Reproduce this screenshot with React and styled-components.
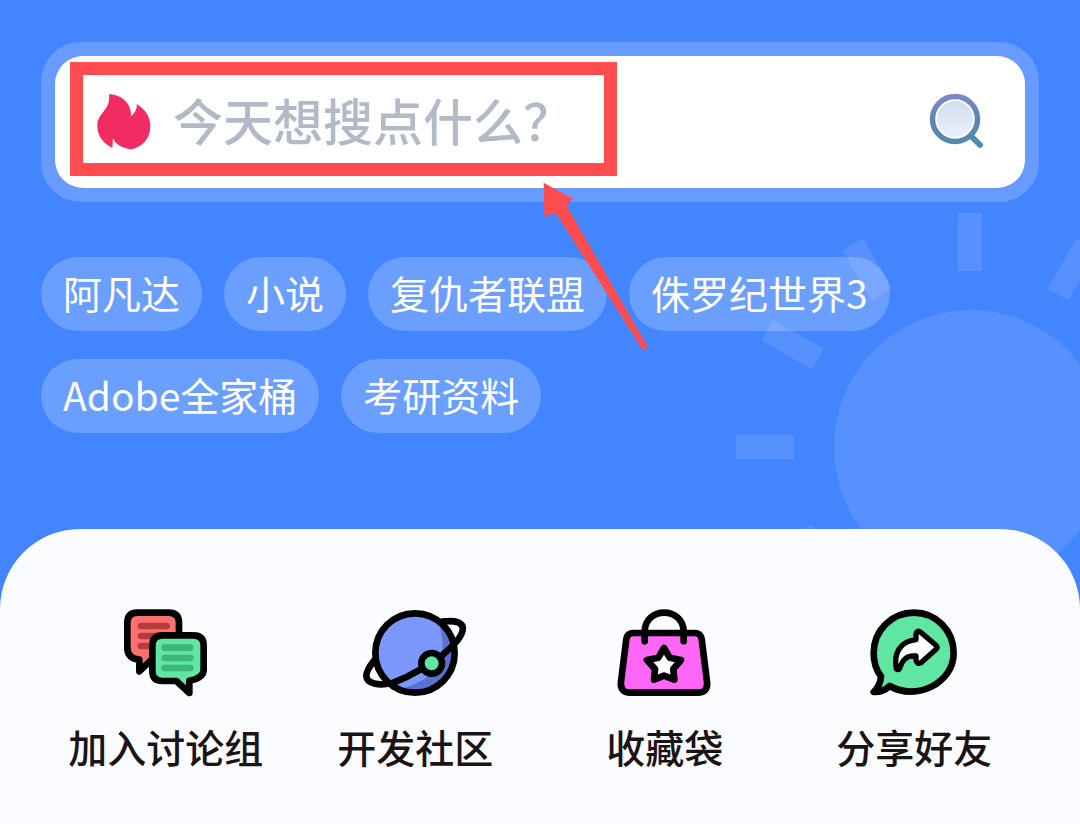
import React from 'react';
import styled, { createGlobalStyle } from 'styled-components';

const GlobalStyle = createGlobalStyle`
  * {
    box-sizing: border-box;
  }
  body {
    margin: 0;
    background: #4285ff;
    font-family: "Noto Sans CJK SC", "Noto Sans", sans-serif;
  }
  button, input {
    font-family: inherit;
  }
`;

const Page = styled.div`
  position: relative;
  display: flex;
  flex-direction: column;
  min-height: 100vh;
  overflow: hidden;
  background: #4285ff;
`;

const Sun = styled.svg`
  position: absolute;
  top: 200px;
  right: 0;
  width: 360px;
  height: 420px;
  fill: #5790ff;
`;

const Header = styled.header`
  position: relative;
  display: flex;
  flex-direction: column;
  gap: 55px;
  padding: 42px 41px 96px;
`;

const SearchBar = styled.form`
  position: relative;
  display: flex;
  align-items: center;
  height: 160px;
  padding: 0 40px 0 42px;
  border: 14px solid #689bff;
  border-radius: 40px;
  background: #689bff;
  &::before {
    content: '';
    position: absolute;
    inset: 0;
    border-radius: 28px;
    background: #fff;
  }
`;

const FlameIcon = styled.svg`
  position: relative;
  flex: none;
  width: 54px;
  height: 56px;
  fill: #f22c63;
`;

const SearchInput = styled.input`
  position: relative;
  flex: 1;
  min-width: 0;
  height: 80px;
  padding: 0 0 6px;
  margin-left: 22px;
  border: 0;
  outline: 0;
  background: transparent;
  color: #333;
  font-size: 50px;
  font-weight: 500;
  line-height: 74px;
  &::placeholder {
    color: #b2bac8;
    opacity: 1;
  }
`;

const SearchButton = styled.button`
  position: relative;
  flex: none;
  width: 58px;
  height: 58px;
  padding: 0;
  border: 0;
  background: transparent;
  cursor: pointer;
  svg {
    display: block;
  }
`;

const Highlight = styled.div`
  position: absolute;
  top: 6px;
  left: 15px;
  width: 547px;
  height: 114px;
  border: 13px solid #ff4d4f;
  pointer-events: none;
`;

const Arrow = styled.svg`
  position: absolute;
  z-index: 1;
  top: 126px;
  left: 488px;
  width: 106px;
  height: 170px;
  fill: #ff4d4f;
  pointer-events: none;
`;

const Tags = styled.div`
  display: flex;
  flex-wrap: wrap;
  gap: 28px 22px;
`;

const Tag = styled.button`
  height: 74px;
  padding: 0 22px 4px;
  border: 0;
  border-radius: 37px;
  background: rgba(255, 255, 255, 0.21);
  color: #fff;
  font-size: 39px;
  line-height: 70px;
  white-space: nowrap;
  cursor: pointer;
`;

const Sheet = styled.nav`
  position: relative;
  flex: 1;
  display: grid;
  grid-template-columns: repeat(4, 1fr);
  align-items: start;
  padding: 78px 41px 40px;
  border-radius: 80px 80px 0 0;
  background: #fafcff;
`;

const Entry = styled.a`
  display: flex;
  flex-direction: column;
  align-items: center;
  gap: 18px;
  color: #1a1414;
  font-size: 39px;
  font-weight: 500;
  line-height: 58px;
  text-decoration: none;
  white-space: nowrap;
`;

const EntryIcon = styled.svg`
  width: 120px;
  height: 92px;
  stroke-linecap: round;
  stroke-linejoin: round;
`;

const tags = ['阿凡达', '小说', '复仇者联盟', '侏罗纪世界3', 'Adobe全家桶', '考研资料'];

const rays = [0, 30, 60, 90, 120, -30];

const ChatIcon = () => (
  <EntryIcon viewBox="-12 36 360 276" fill="none" stroke="#000" strokeWidth="20" aria-hidden="true">
    <path d="M82 53H176Q207 53 207 84V160Q207 191 176 191H128L88 229V194Q52 190 52 158V84Q52 53 82 53Z" fill="#ff706f" />
    <path d="M93 93H170M93 123H150M93 153H150" stroke="#b53c3e" />
    <path d="M158 121H250Q281 121 281 152V224Q281 249 238 257V294L199 258H158Q127 258 127 228V152Q127 121 158 121Z" fill="#5ee6a2" />
    <path d="M164 158H241M164 189H241M164 219H241" stroke="#3fb57c" />
  </EntryIcon>
);

const PlanetIcon = () => (
  <EntryIcon viewBox="0 36 360 276" fill="none" stroke="#000" strokeWidth="20" aria-hidden="true">
    <circle cx="180" cy="174" r="119" fill="#7c98ff" stroke="none" />
    <path d="M250 80C276 160 272 240 150 278C235 306 299 247 299 174C299 134 278 100 250 80Z" fill="#5c70cf" stroke="none" />
    <circle cx="180" cy="174" r="119" />
    <path d="M262 80C303 75 327 82 323 106C318 129 297 150 260 182M201 221C166 242 140 254 110 265C70 272 36 267 34 244C33 228 45 212 58 196" />
    <circle cx="230" cy="205" r="31" fill="#5ee6a2" />
  </EntryIcon>
);

const BagIcon = () => (
  <EntryIcon viewBox="0 36 360 276" fill="none" stroke="#000" strokeWidth="20" aria-hidden="true">
    <path d="M86 114H268Q287 114 290 132L306 260Q310 293 278 293H76Q44 293 48 260L64 132Q67 114 86 114Z" fill="#ff66f5" />
    <path d="M119 139V110C119 34 236 34 236 110V139" />
    <path d="M177 159L194 188L228 195L205 222L208 254L177 242L147 254L150 222L126 195L160 188Z" fill="#fff" />
  </EntryIcon>
);

const ShareIcon = () => (
  <EntryIcon viewBox="-2 36 360 276" fill="none" stroke="#000" strokeWidth="20" aria-hidden="true">
    <path d="M105 273C184 319 297 265 297 174C297 106 244 53 178 53C111 53 57 106 57 174C57 203 65 226 79 244C78 264 70 278 57 291C77 292 92 285 105 273Z" fill="#5ee6a2" />
    <path d="M125 222C116 174 136 139 184 134V117Q186 104 197 111L244 151Q250 157 244 163L199 203Q186 210 184 195V183C156 180 144 194 135 220Q131 227 125 222Z" fill="#fff" strokeWidth="16" />
  </EntryIcon>
);

const entries = [
  { label: '加入讨论组', Icon: ChatIcon },
  { label: '开发社区', Icon: PlanetIcon },
  { label: '收藏袋', Icon: BagIcon },
  { label: '分享好友', Icon: ShareIcon },
];

const Search = () => (
  <SearchBar role="search" onSubmit={(e) => e.preventDefault()}>
    <FlameIcon viewBox="200 191 162 168" aria-hidden="true">
      <path d="M236 192C274 192 305 222 302 258C313 248 321 236 319 221C344 236 360 260 360 286C360 325 337 350 302 357C275 353 253 341 248 323L246 353C218 338 201 316 201 286C201 246 242 242 236 192Z" />
    </FlameIcon>
    <SearchInput type="text" aria-label="搜索" placeholder="今天想搜点什么？" />
    <SearchButton type="submit" aria-label="搜索">
      <svg width="58" height="58" viewBox="0 0 58 58" fill="none">
        <defs>
          <linearGradient id="lens-ring" gradientUnits="userSpaceOnUse" x1="28" y1="2" x2="36" y2="56">
            <stop offset="0" stopColor="#8087c6" />
            <stop offset="0.4" stopColor="#5d86b8" />
            <stop offset="1" stopColor="#508ba9" />
          </linearGradient>
          <linearGradient id="lens-glass" x1="0" y1="0" x2="0" y2="1">
            <stop offset="0" stopColor="#d3ddec" />
            <stop offset="1" stopColor="#e9f1fc" />
          </linearGradient>
        </defs>
        <circle cx="28" cy="26" r="18" fill="url(#lens-glass)" />
        <path d="M45 44L53 52" stroke="url(#lens-ring)" strokeWidth="6" strokeLinecap="round" />
        <circle cx="28" cy="26" r="22.5" stroke="url(#lens-ring)" strokeWidth="5.5" />
      </svg>
    </SearchButton>
    <Highlight />
    <Arrow viewBox="70 96 318 510" aria-hidden="true">
      <path d="M72 98L162 148L140 166L384 590Q378 602 368 598L108 188L74 200Z" />
    </Arrow>
  </SearchBar>
);

const App = () => (
  <Page>
    <GlobalStyle />
    <Sun viewBox="0 0 360 420" aria-hidden="true">
      <circle cx="251" cy="247" r="137" />
      {rays.map((angle) => (
        <rect key={angle} x="16" y="235" width="58" height="24" transform={`rotate(${angle} 250 247)`} />
      ))}
    </Sun>
    <Header>
      <Search />
      <Tags>
        {tags.map((tag) => <Tag key={tag} type="button">{tag}</Tag>)}
      </Tags>
    </Header>
    <Sheet>
      {entries.map(({ label, Icon }) => (
        <Entry key={label} href="#">
          <Icon />
          {label}
        </Entry>
      ))}
    </Sheet>
  </Page>
);

export default App;
